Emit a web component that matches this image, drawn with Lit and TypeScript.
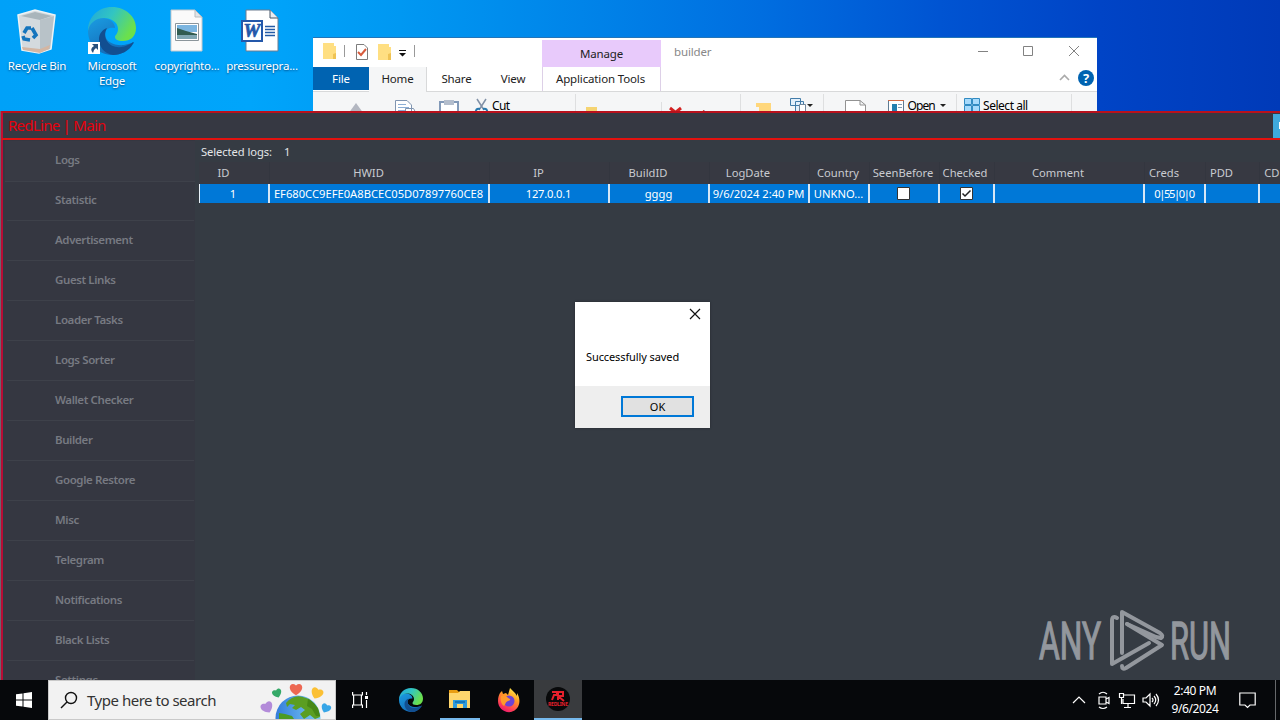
import { LitElement, html, svg, css } from "lit";
import { customElement, property } from "lit/decorators.js";
import { classMap } from "lit/directives/class-map.js";

const menuItems = [
  "Logs",
  "Statistic",
  "Advertisement",
  "Guest Links",
  "Loader Tasks",
  "Logs Sorter",
  "Wallet Checker",
  "Builder",
  "Google Restore",
  "Misc",
  "Telegram",
  "Notifications",
  "Black Lists",
  "Settings",
];

interface Column {
  title: string;
  width: number;
  shift: number;
  value?: string;
  check?: boolean;
}

// shift is the room kept for the sort arrow to the right of the title
const columns: Column[] = [
  { title: "ID", width: 71, shift: 21, value: "1" },
  { title: "HWID", width: 220, shift: 22, value: "EF680CC9EFE0A8BCEC05D07897760CE8" },
  { title: "IP", width: 120, shift: 22, value: "127.0.0.1" },
  { title: "BuildID", width: 100, shift: 23, value: "gggg" },
  { title: "LogDate", width: 100, shift: 23, value: "9/6/2024 2:40 PM" },
  { title: "Country", width: 60, shift: 3, value: "UNKNO..." },
  { title: "SeenBefore", width: 70, shift: 3, check: false },
  { title: "Checked", width: 55, shift: 4, check: true },
  { title: "Comment", width: 150, shift: 23 },
  { title: "Creds", width: 61, shift: 22, value: "0|55|0|0" },
  { title: "PDD", width: 54, shift: 22 },
  { title: "CDD", width: 60, shift: 27 },
];

const edgeLogo = () => svg`
  <defs>
    <linearGradient id="eb" x1="0" y1="0" x2=".6" y2="1">
      <stop offset="0" stop-color="#1b9de2" /><stop offset="1" stop-color="#1368b5" />
    </linearGradient>
    <linearGradient id="eg" x1="0" y1="0" x2="1" y2=".45">
      <stop offset="0" stop-color="#1fa5dd" /><stop offset=".5" stop-color="#32c5c2" /><stop offset="1" stop-color="#6be04c" />
    </linearGradient>
  </defs>
  <path fill="url(#eb)" d="M0 24C0 14 7 11 14 11C21 11 27 15 27 21C20 20 17 23 17 27C17 35 27 39 36 38L44 36C40 44 33 48 25 48C11 48 0 38 0 24Z" />
  <path fill="#124f91" d="M19 21C14 30 20 39 29 40C35 41 41 38 45 35C46 35 46 36 45 37C41 44 33 48 25 48C15 46 11 39 11 32C11 27 14 23 19 21Z" />
  <path fill="url(#eg)" d="M0 24C0 10 10 0 24 0C38 0 48 10 48 21C48 30 42 34 35 34C29 34 27 32 27 30C27 28 30 27 30 22C30 15 23 11 16 11C7 11 1 17 0 24Z" />
`;

const glyphs: Record<string, unknown> = {
  bin: svg`
    <path fill="#d4dade" stroke="#edf3f5" stroke-width="1.500" d="M5 8L22 3L42 8L38 42L26 46L9 43Z" />
    <path fill="#a9b5bb" d="M8 9L22 5L39 9L27 13Z" />
    <path fill="#b8c2c8" d="M27 13L41 9L37 42L27 45Z" />
    <path fill="#d3b6a3" d="M9 40L27 42L37 38L36 42L27 46L10 43Z" />
    <g fill="none" stroke="#1575bd" stroke-width="3.600">
      <path d="M11 26L14 21H18" /><path d="M19 21L23 28L20 31" /><path d="M17 33L11 32L10 29" />
    </g>`,
  edge: edgeLogo(),
  image: svg`
    <path fill="#fafafa" stroke="#c4c9cd" d="M8 3H32L39 10V44H8Z" />
    <path fill="#e0e4e7" stroke="#b7bdc0" d="M32 3V10H39Z" />
    <path fill="#fff" stroke="#8b959b" d="M12.500 16.500H35.500V33.500H12.500Z" />
    <path fill="#7bb5e0" d="M14 18H34V25H14Z" />
    <path fill="#315c50" d="M14 21L23 24L34 27V28H14Z" />
    <path fill="#7fa6b1" d="M14 28H34V32H14Z" />`,
  word: svg`
    <path fill="#fff" stroke="#6d7d90" d="M8 3H32L40 11V44H8Z" />
    <path fill="#e9edf2" stroke="#455567" d="M32 3V11H40" />
    <path stroke="#245ba6" stroke-width="1.400" d="M27 19.500H37M27 22.500H37M27 25.500H37M27 28.500H37" />
    <path fill="#fff" stroke="#2458aa" stroke-width="2" d="M4 14H24V34H4Z" />
    <text x="14" y="30" text-anchor="middle" font-family="Liberation Serif, serif" font-weight="700" font-style="italic" font-size="19" fill="#2458aa" stroke="#2458aa" stroke-width=".7">W</text>`,
};

@customElement("desktop-icon")
export class DesktopIcon extends LitElement {
  @property({ type: String }) icon: string = "";
  @property({ type: String }) label: string = "";

  render() {
    return html`
      <svg class="picture" viewBox="0 0 48 48">
        ${glyphs[this.icon]}
        ${this.icon === "edge"
          ? svg`<path fill="#fff" d="M0 35H12V47H0Z" /><path fill="#29507c" d="M4 37H10V43L8 41Q5 43 5 46Q1 42 6 39Z" />`
          : ""}
      </svg>
      <span class="label">${this.label}</span>
    `;
  }

  static styles = css`
    :host {
      display: flex;
      flex-direction: column;
      align-items: center;
      width: 74px;
    }
    .picture {
      width: 48px;
      height: 48px;
      overflow: visible;
    }
    .label {
      margin-top: 3px;
      width: 74px;
      color: #fff;
      font-size: 11.5px;
      letter-spacing: -0.2px;
      line-height: 15px;
      text-align: center;
      white-space: pre-line;
      text-shadow: 0 1px 2px rgba(0, 40, 90, 0.7);
    }
  `;
}

@customElement("explorer-window")
export class ExplorerWindow extends LitElement {
  render() {
    return html`
      <header class="title-row">
        <div class="quick">
          <svg width="110" height="26" viewBox="0 0 110 26">
            <path fill="#ffdf82" d="M10 5H21V8H23V21H10Z" /><path fill="#efc354" d="M20 16L23 15V21H20Z" />
            <path stroke="#999" d="M31.500 7V19" />
            <path fill="#fff" stroke="#7c7c7c" d="M43.500 6.500H51L54.500 10V21.500H43.500Z" />
            <path fill="none" stroke="#d75b3d" stroke-width="2" d="M45 14L48 17L53 11" />
            <path fill="#ffdf82" d="M65 6H76V9H78V22H65Z" /><path fill="#efc354" d="M75 16L78 15V22H75Z" />
            <path fill="#111" d="M86 12H93V13H86ZM86 15H93L89.500 18.500Z" />
            <path stroke="#999" d="M101.500 7V19" />
          </svg>
        </div>
        <span class="manage">Manage</span>
        <span class="name">builder</span>
        <svg class="buttons" width="120" height="30" viewBox="0 0 120 30">
          <path fill="none" stroke="#828282" d="M1 13.500H11M46.500 8.500H55.500V17.500H46.500ZM92 8L102 18M102 8L92 18" />
        </svg>
      </header>
      <nav class="tabs">
        <span class="tab file">File</span>
        <span class="tab home">Home</span>
        <span class="tab share">Share</span>
        <span class="tab view">View</span>
        <span class="tab tools">Application Tools</span>
        <svg class="help" width="42" height="22" viewBox="0 0 42 22">
          <path fill="none" stroke="#aaa" stroke-width="1.600" d="M5 13L9.500 8.500L14 13" />
          <circle cx="31" cy="11" r="8" fill="#0063b1" />
          <text x="31" y="15.500" fill="#fff" text-anchor="middle" font-size="13" font-weight="700">?</text>
        </svg>
      </nav>
      <div class="ribbon">
        <svg width="784" height="22" viewBox="0 0 784 22">
          <path stroke="#dedfe0" d="M262.500 2V22M348.500 10V22M427.500 2V22M510.500 2V22M643.500 2V22M758.500 2V22" />
          <path fill="#b3b7c1" d="M43 11L51 22H35Z" />
          <path fill="#fff" stroke="#8095b1" d="M82.500 8.500H94L98.500 13V22H82.500ZM92.500 16.500H100.500L103.500 22H92.500Z" />
          <path stroke="#8cafd6" d="M85 12.500H93M85 15.500H96M85 18.500H92" />
          <path fill="#fff" stroke="#8299b8" stroke-width="2" d="M127 10H145V23H127Z" />
          <path fill="#b3bdcc" d="M131 8H141V13H131Z" />
          <path stroke="#8090a6" stroke-width="1.500" d="M164 7L171 18M173 7L166 18" />
          <path fill="none" stroke="#2879ae" stroke-width="2" d="M163 21Q162 16 167 17M174 21Q175 16 170 17" />
          <text x="179" y="18" font-size="12" textLength="18">Cut</text>
          <path fill="#f5d472" d="M273 15H284V22H273Z" />
          <text x="289" y="28" font-size="12" fill="#c34545">Move to</text>
          <path stroke="#d32222" stroke-width="3" d="M357 16L367 24M368 16L358 24" />
          <text x="374" y="28" font-size="12" fill="#8a2222">Delete</text>
          <path fill="#ffd77c" d="M443 11H458V22H446V15H443Z" />
          <path fill="#e4f0fb" stroke="#427ca9" d="M477.500 6.500H487.500V13.500H477.500ZM482.500 9.500H490.500V19.500H482.500Z" />
          <path fill="#fff" stroke="#72879b" d="M486.500 12.500H492.500V22H486.500Z" />
          <path fill="#222" d="M494 12H500L497 15Z" />
          <path fill="#fff" stroke="#929292" d="M532.500 8.500H547L552.500 13V22H532.500ZM547 8.500V13H552.500" />
          <path fill="#fff" stroke="#5f7b92" d="M575.500 8.500H590.500V22H575.500Z" />
          <path fill="#d26a45" d="M575 8H591V9H575Z" /><path fill="#247fae" d="M579 12H584V19H579Z" />
          <path stroke="#829db4" d="M585 12.500H589M585 15.500H589" />
          <text x="594.500" y="18" font-size="12" textLength="28">Open</text>
          <path fill="#222" d="M627 12H633L630 15Z" />
          <path fill="#a7dafb" stroke="#318bc2" d="M651.500 6.500H658.500V12.500H651.500ZM659.500 6.500H666.500V12.500H659.500ZM651.500 13.500H658.500V20H651.500ZM659.500 13.500H666.500V20H659.500Z" />
          <text x="670" y="18" font-size="12" textLength="45">Select all</text>
        </svg>
      </div>
    `;
  }

  static styles = css`
    :host {
      display: block;
      width: 784px;
      height: 80px;
      background: #fff;
      color: #222;
      font-size: 11.5px;
      letter-spacing: -0.15px;
      overflow: hidden;
      border-top: 1px solid #2375b8;
      box-sizing: border-box;
    }
    svg {
      display: block;
    }
    .title-row {
      display: flex;
      height: 29px;
    }
    .quick {
      width: 225px;
    }
    .manage {
      width: 119px;
      height: 27px;
      margin: 2px 0 0 4px;
      line-height: 27px;
      box-sizing: border-box;
      background: #e8cafb;
      text-align: center;
    }
    .name {
      margin-left: 13px;
      line-height: 27px;
      color: #888;
    }
    .buttons {
      margin-left: auto;
    }
    .tabs {
      display: flex;
      height: 24px;
      line-height: 23px;
      border-bottom: 1px solid #d8d9da;
    }
    .tab {
      text-align: center;
    }
    .file {
      width: 56px;
      height: 23px;
      background: #0063b1;
      color: #fff;
    }
    .home {
      width: 57px;
      height: 25px;
      background: #f5f6f7;
      border-right: 1px solid #d8d9da;
    }
    .share {
      width: 59px;
    }
    .view {
      width: 54px;
      padding-right: 2px;
    }
    .tools {
      width: 115px;
      padding-right: 2px;
      border-left: 1px solid #ddd0e7;
      border-right: 1px solid #ddd0e7;
    }
    .help {
      margin-left: auto;
    }
    .ribbon {
      height: 30px;
      background: #f5f6f7;
    }
  `;
}

@customElement("log-grid")
export class LogGrid extends LitElement {
  render() {
    return html`
      <p class="selected"><span>Selected logs:</span><span>1</span></p>
      <div class="row head">
        ${columns.map(
          (c) => html`<span class="cell" style="width:${c.width}px;padding-right:${c.shift}px">${c.title}</span>`
        )}
      </div>
      <div class="row data">
        ${columns.map(
          (c) => html`<span class=${classMap({ cell: true, creds: c.title === "Creds", ip: c.title === "IP" })} style="width:${c.width}px">
            ${c.check === undefined
              ? c.value ?? ""
              : html`<svg class="box" viewBox="0 0 13 13">
                  <path fill="#fff" stroke="#333" d="M.5 .5H12.500V12.500H.5Z" />
                  ${c.check ? svg`<path fill="none" stroke="#222" stroke-width="1.500" d="M2.500 6.500L5 9L10.500 3.500" />` : ""}
                </svg>`}
          </span>`
        )}
      </div>
    `;
  }

  static styles = css`
    :host {
      display: block;
      width: 1082px;
      padding-left: 4px;
      font-size: 11.2px;
      color: #e4e6e8;
    }
    .selected {
      display: flex;
      gap: 12px;
      margin: 0;
      padding: 1px 0 0 2px;
      height: 22px;
      line-height: 21px;
      letter-spacing: -0.08px;
      box-sizing: border-box;
    }
    .row {
      display: flex;
      white-space: nowrap;
    }
    .cell {
      display: flex;
      flex: none;
      justify-content: center;
      align-items: center;
      box-sizing: border-box;
    }
    .head {
      height: 22px;
      background: #373942;
      color: #c9cbd0;
    }
    .head .cell {
      padding-bottom: 2px;
      border-right: 1px solid #33363f;
    }
    .data {
      height: 19px;
      background: #0078d7;
      color: #fff;
      border-left: 1px solid #e8f1f9;
    }
    .data .cell {
      padding-right: 1px;
      border-right: 2px solid #d5e7f6;
    }
    .data .cell:first-child {
      margin-left: -1px;
    }
    .data .ip {
      letter-spacing: -0.2px;
    }
    .data .creds {
      letter-spacing: -1.4px;
    }
    .box {
      width: 13px;
      height: 13px;
    }
  `;
}

@customElement("redline-window")
export class RedlineWindow extends LitElement {
  render() {
    return html`
      <header class="title"><span class="caption">RedLine | Main</span><span class="edge-button"></span></header>
      <div class="body">
        <nav class="menu">
          ${menuItems.map((name, i) => html`<span class=${classMap({ item: true, active: i === 0 })}>${name}</span>`)}
        </nav>
        <log-grid></log-grid>
      </div>
    `;
  }

  static styles = css`
    :host {
      display: block;
      box-sizing: border-box;
      width: 1280px;
      height: 569px;
      overflow: hidden;
      background: #353b43;
      border-left: 1px solid #6d656e;
    }
    .title {
      display: flex;
      align-items: center;
      justify-content: space-between;
      height: 29px;
      box-sizing: border-box;
      border-top: 2px solid #b9111c;
      border-bottom: 2px solid #e3120f;
      border-left: 2px solid #c50c31;
      background: #363842;
    }
    .caption {
      margin: -2px 0 0 5px;
      color: #e8000c;
      font-size: 15px;
      letter-spacing: -0.72px;
    }
    .edge-button {
      width: 7px;
      height: 24px;
      box-sizing: border-box;
      border-left: 6px solid #3fa9dc;
      background: linear-gradient(#3fa9dc 8px, #fff 8px, #fff 15px, #3fa9dc 15px);
    }
    .body {
      display: flex;
      border-left: 2px solid #b90c35;
      height: 540px;
    }
    .menu {
      flex: none;
      width: 192px;
      box-sizing: border-box;
      padding-top: 1px;
      background: #353741;
    }
    .item {
      display: block;
      box-sizing: border-box;
      height: 40px;
      margin: 0 1px 0 4px;
      padding-left: 48px;
      line-height: 38px;
      font-size: 11.5px;
      font-weight: 600;
      letter-spacing: -0.4px;
      color: #777a82;
      border-bottom: 1px solid #3e414a;
    }
    .active {
      height: 41px;
      margin: 0 0 -1px 2px;
      padding-left: 50px;
      background: #383a44;
    }
    log-grid {
      flex: none;
    }
  `;
}

@customElement("message-box")
export class MessageBox extends LitElement {
  render() {
    return html`
      <div class="top">
        <svg width="12" height="12" viewBox="0 0 12 12"><path stroke="#111" stroke-width="1.200" d="M1 1L11 11M11 1L1 11" /></svg>
      </div>
      <p class="message">Successfully saved</p>
      <footer class="foot"><button class="ok">OK</button></footer>
    `;
  }

  static styles = css`
    :host {
      display: flex;
      flex-direction: column;
      width: 135px;
      height: 126px;
      background: #fff;
      color: #000;
      font-size: 11px;
      box-shadow: 0 0 2px #22272d;
    }
    .top {
      display: flex;
      justify-content: flex-end;
      padding: 6px 9px 0 0;
    }
    .top svg {
      display: block;
    }
    .message {
      flex: 1;
      margin: 0;
      padding: 29px 0 0 11px;
      line-height: 16px;
      letter-spacing: -0.1px;
      white-space: nowrap;
    }
    .foot {
      display: flex;
      justify-content: flex-end;
      height: 42px;
      padding: 10px 16px 0 0;
      box-sizing: border-box;
      background: #eee;
    }
    .ok {
      width: 73px;
      height: 21px;
      padding: 0;
      border: 2px solid #0078d7;
      background: #e1e1e1;
      font: inherit;
    }
  `;
}

@customElement("any-run-mark")
export class AnyRunMark extends LitElement {
  render() {
    return html`
      <svg width="194" height="66" viewBox="0 0 194 66">
        <g class="letters">
          <text x="1" y="51" textLength="62" lengthAdjust="spacingAndGlyphs">ANY</text>
          <text x="132" y="51" textLength="61" lengthAdjust="spacingAndGlyphs">RUN</text>
        </g>
        <g fill="none" stroke="#93979d" stroke-width="4" stroke-linecap="round" stroke-linejoin="round">
          <path d="M79 10Q74 7 74 13V56L111 35" />
          <path d="M84 45V4L122 25Q126 28 123 30L118 29L89 16" />
          <path d="M89 16L124 37L88 60Q84 62 84 58" />
        </g>
      </svg>
    `;
  }

  static styles = css`
    svg {
      display: block;
    }
    .letters {
      fill: #93979d;
      stroke: #93979d;
      stroke-width: 1.3px;
      font-family: "Roboto", sans-serif;
      font-size: 51px;
    }
  `;
}

@customElement("task-bar")
export class TaskBar extends LitElement {
  render() {
    return html`
      <div class="start">
        <svg width="16" height="16" viewBox="0 0 16 16"><path fill="#fff" d="M0 2.300L6.500 1.400V7.500H0ZM7.500 1.200L16 0V7.500H7.500ZM0 8.500H6.500V14.600L0 13.700ZM7.500 8.500H16V16L7.500 14.800Z" /></svg>
      </div>
      <div class="search">
        <svg class="lens" width="18" height="18" viewBox="0 0 18 18"><path fill="none" stroke="#111" stroke-width="1.400" d="M7 11L1 17" /><circle cx="11" cy="7" r="5.500" fill="none" stroke="#111" stroke-width="1.400" /></svg>
        <span class="hint">Type here to search</span>
        <svg class="earth" width="74" height="38" viewBox="0 0 74 38">
          <defs>
            <path id="heart" d="M0 7C-12 0 -6 -9 0 -4C6 -9 12 0 0 7Z" />
            <linearGradient id="sea"><stop offset="0" stop-color="#347cdb" /><stop offset="1" stop-color="#7cccf4" /></linearGradient>
          </defs>
          <circle cx="37" cy="37" r="22.500" fill="url(#sea)" />
          <path fill="#5b9e22" d="M25 22C30 16 36 14 42 16L48 18L52 22L57 27L59 36L54 38L49 34L43 38L39 33L44 29L40 26L35 29L31 27L34 24L29 23L26 26Z" />
          <path fill="#468816" d="M47 18C54 21 58 28 59 35L55 35L51 28L46 25Z" />
          <path fill="#4c9b24" d="M18 32L24 33L31 35L33 38H18Z" />
          <use href="#heart" transform="translate(35 8) scale(.9)" fill="#ed6853" />
          <use href="#heart" transform="translate(56 12) rotate(24) scale(.87)" fill="#fbc034" />
          <use href="#heart" transform="translate(16 12) rotate(-20) scale(.68)" fill="#35a967" />
          <use href="#heart" transform="translate(6 26) rotate(-25) scale(.87)" fill="#b38bd9" />
          <use href="#heart" transform="translate(65 27) rotate(25) scale(.7)" fill="#36a5e7" />
        </svg>
      </div>
      <div class="apps">
        <span class="app view">
          <svg width="16" height="16" viewBox="0 0 16 16"><path fill="none" stroke="#fff" stroke-width="1.200" d="M.6 0V3H10.400V0M.6 16V13H10.400V16M1.600 3V13M9.400 3V13M14.500 0V3M14.500 8V16" /><path fill="#fff" d="M13 4H16V7H13Z" /></svg>
        </span>
        <span class="app edge"><svg width="24" height="24" viewBox="0 0 48 48">${edgeLogo()}</svg></span>
        <span class="app open">
          <svg width="22" height="20" viewBox="0 0 22 20"><path fill="#e99d13" d="M0 1H8L10 3V7H0Z" /><path fill="#ffd66d" d="M0 4L9 4L11 2H21V19H0Z" /><path fill="#319bdc" d="M4 11H18V19H14V15H8V19H4Z" /><path fill="#1778bd" d="M6 12H16V14H6Z" /></svg>
        </span>
        <span class="app">
          <svg width="24" height="24" viewBox="0 0 24 24">
            <defs><linearGradient id="fox" x1=".8" y1="0" x2=".3" y2="1"><stop offset="0" stop-color="#fff44f" /><stop offset=".4" stop-color="#ff9c25" /><stop offset=".75" stop-color="#ff4552" /><stop offset="1" stop-color="#ec176f" /></linearGradient></defs>
            <path fill="url(#fox)" d="M3 5L5 3L6 6L9 5L11 7L13 0L18 5L20 8V5C25 13 22 22 14 24C7 25 1 20 1 13C1 9 2 7 3 5Z" />
            <circle cx="12" cy="13" r="5.500" fill="#6c43d5" /><path fill="#ff9a2b" d="M4 8C7 6 10 8 11 10C14 11 14 12 11 13C8 14 9 16 7 18C4 16 3 12 4 8Z" />
          </svg>
        </span>
        <span class="app active">
          <svg width="24" height="24" viewBox="0 0 24 24"><circle cx="12" cy="12" r="12" fill="#08090a" /><path fill="none" stroke="#e5202c" stroke-width="2" d="M6 5H11V8H8L6 13M11 5H17V9H12L18 14M12 5V13" /><text x="12" y="19" text-anchor="middle" font-size="5" font-weight="700" textLength="20" fill="#e5202c">REDLINE</text></svg>
        </span>
      </div>
      <div class="tray">
        <svg width="90" height="20" viewBox="0 0 90 20">
          <g fill="none" stroke="#fff" stroke-width="1.200">
            <path d="M1 13L7 7L13 13" />
            <path d="M27 7H34V14H27ZM34 9L37 7.500V13.500L34 12M27 4Q31 .5 35 4M27 17Q31 20 35 17" />
            <path d="M51 5H62.500V13.500H51V9M56 14V17M52 17.500H59M47.500 3.500H51.500V7.500H47.500ZM49.500 8V14" />
            <path d="M71 8H74L78 4V16L74 12H71ZM80 8Q82 10 80 12M82 6Q85.500 10 82 14M84 4Q89 10 84 16" />
          </g>
        </svg>
        <div class="clock"><span>2:40 PM</span><span>9/6/2024</span></div>
        <svg class="note" width="17" height="17" viewBox="0 0 17 17"><path fill="none" stroke="#fff" stroke-width="1.200" d="M.8 1H16.200V13H11L8.500 15.500L6 13H.8Z" /></svg>
        <i class="show-desktop"></i>
      </div>
    `;
  }

  static styles = css`
    :host {
      display: flex;
      width: 1280px;
      height: 40px;
      background: #06080b;
      color: #fff;
    }
    svg {
      display: block;
      overflow: visible;
    }
    .start {
      display: flex;
      align-items: center;
      justify-content: center;
      width: 48px;
    }
    .search {
      display: flex;
      align-items: center;
      width: 288px;
      box-sizing: border-box;
      border: 1px solid #c9c9c9;
      background: #f2f2f2;
      color: #333;
      overflow: hidden;
    }
    .lens {
      margin-left: 11px;
    }
    .hint {
      margin-left: 9px;
      font-size: 15px;
      letter-spacing: -0.48px;
      white-space: nowrap;
    }
    .earth {
      margin-left: auto;
    }
    .apps {
      display: flex;
    }
    .app {
      display: flex;
      align-items: center;
      justify-content: center;
      width: 49px;
      box-sizing: border-box;
    }
    .view {
      padding-right: 2px;
    }
    .edge {
      width: 52px;
    }
    .open {
      width: 40px;
      margin: 0 4px 0 3px;
      border-bottom: 2px solid #76b9ed;
    }
    .active {
      width: 48px;
      margin-left: 1px;
      background: #393b3e;
      border-bottom: 2px solid #76b9ed;
    }
    .tray {
      display: flex;
      align-items: center;
      margin-left: auto;
      font-size: 12px;
    }
    .clock {
      display: flex;
      flex-direction: column;
      align-items: center;
      width: 62px;
      margin-left: 2px;
      line-height: 18px;
      letter-spacing: -0.4px;
    }
    .note {
      margin: 1px 19px 0 13px;
    }
    .show-desktop {
      width: 4px;
      height: 40px;
      border-left: 1px solid #66686b;
    }
  `;
}

@customElement("app-root")
export class AppRoot extends LitElement {
  render() {
    return html`
      <div class="icons">
        <desktop-icon icon="bin" label="Recycle Bin"></desktop-icon>
        <desktop-icon icon="edge" label="Microsoft Edge"></desktop-icon>
        <desktop-icon icon="image" label="copyrighto..."></desktop-icon>
        <desktop-icon icon="word" label="pressurepra..."></desktop-icon>
      </div>
      <explorer-window class="explorer"></explorer-window>
      <redline-window class="redline"></redline-window>
      <message-box class="message"></message-box>
      <any-run-mark class="mark"></any-run-mark>
      <task-bar class="taskbar"></task-bar>
    `;
  }

  static styles = css`
    :host {
      display: block;
      position: relative;
      width: 1280px;
      height: 720px;
      overflow: hidden;
      background: linear-gradient(90deg, #00a1f8 0, #00a5fb 250px, #0098f2 400px, #0082e8 600px, #006ee0 760px, #0054d2 940px, #0044c6 1100px, #003ab8 1280px);
      font-family: "Noto Sans", "Open Sans", sans-serif;
    }
    .icons {
      display: flex;
      gap: 1px;
      padding-top: 7px;
    }
    .explorer {
      position: absolute;
      left: 313px;
      top: 37px;
    }
    .redline {
      position: absolute;
      left: 0;
      top: 111px;
    }
    .message {
      position: absolute;
      left: 575px;
      top: 302px;
    }
    .mark {
      position: absolute;
      left: 1038px;
      top: 608px;
    }
    .taskbar {
      position: absolute;
      left: 0;
      top: 680px;
    }
  `;
}
